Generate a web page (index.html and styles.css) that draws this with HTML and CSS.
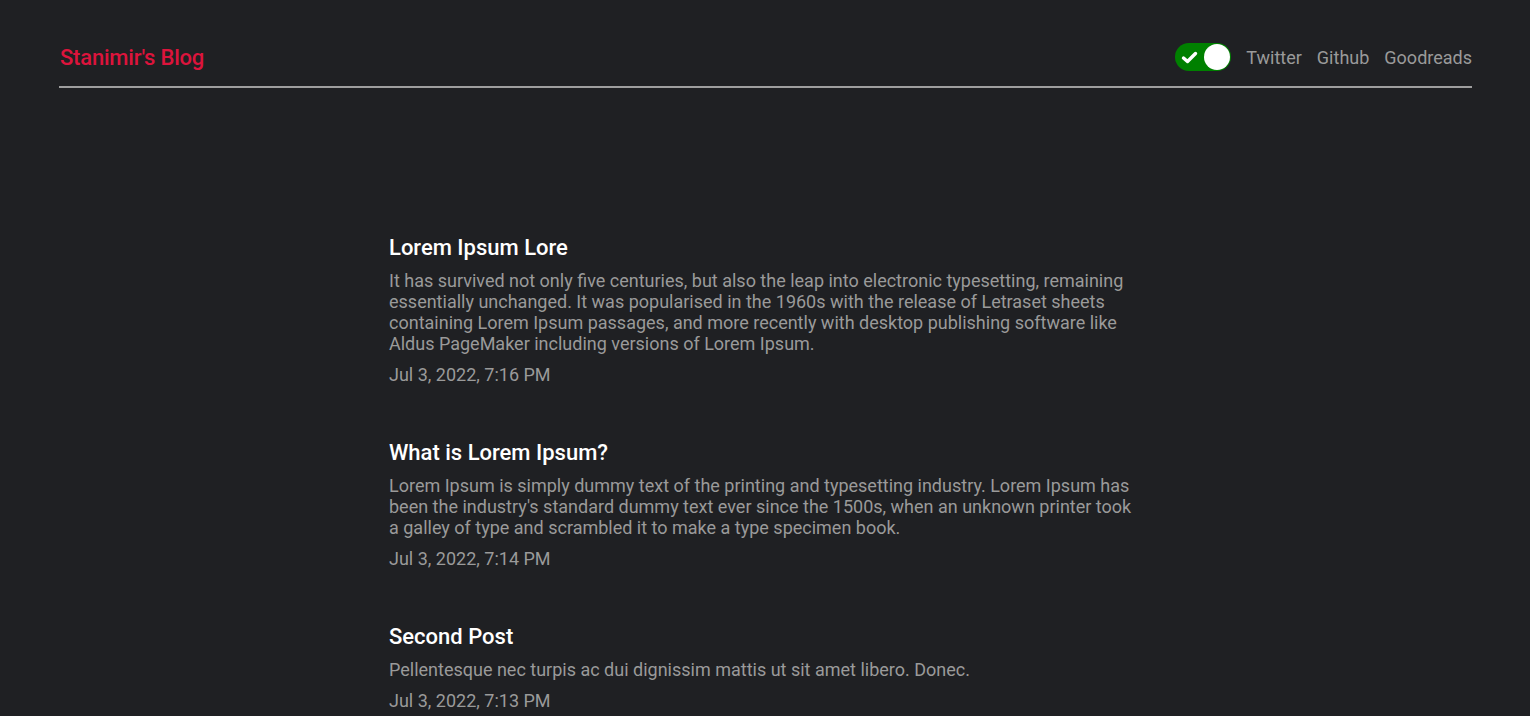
FILE: index.html
```html
<!DOCTYPE html>
<html lang="en">
<head>
<meta charset="utf-8">
<title>Stanimir's Blog</title>
<link rel="stylesheet" href="styles.css">
</head>
<body>
<header class="site-header">
  <a class="brand" href="#">Stanimir's Blog</a>
  <nav class="nav">
    <span class="toggle">
      <svg class="check" width="17" height="15" viewBox="0 0 17 15"><path d="M2.5 8 L6.5 11.5 L14.5 3.5" fill="none" stroke="#fff" stroke-width="3.4" stroke-linecap="round" stroke-linejoin="round"/></svg>
      <span class="knob"></span>
    </span>
    <a href="#">Twitter</a>
    <a href="#">Github</a>
    <a href="#">Goodreads</a>
  </nav>
</header>
<main class="posts">
  <article class="post">
    <h3 class="post-title">Lorem Ipsum Lore</h3>
    <p class="post-body">It has survived not only five centuries, but also the leap into electronic typesetting, remaining essentially unchanged. It was popularised in the 1960s with the release of Letraset sheets containing Lorem Ipsum passages, and more recently with desktop publishing software like Aldus PageMaker including versions of Lorem Ipsum.</p>
    <small class="post-date">Jul 3, 2022, 7:16 PM</small>
  </article>
  <article class="post">
    <h3 class="post-title">What is Lorem Ipsum?</h3>
    <p class="post-body">Lorem Ipsum is simply dummy text of the printing and typesetting industry. Lorem Ipsum has been the industry's standard dummy text ever since the 1500s, when an unknown printer took a galley of type and scrambled it to make a type specimen book.</p>
    <small class="post-date">Jul 3, 2022, 7:14 PM</small>
  </article>
  <article class="post">
    <h3 class="post-title">Second Post</h3>
    <p class="post-body">Pellentesque nec turpis ac dui dignissim mattis ut sit amet libero. Donec.</p>
    <small class="post-date">Jul 3, 2022, 7:13 PM</small>
  </article>
</main>
</body>
</html>
```
FILE: styles.css
```css
html, body {
  margin: 0;
  padding: 0;
  background: #1f2023;
  font-family: Roboto, "Liberation Sans", sans-serif;
  color: #9a9a9a;
}
a { text-decoration: none; }

.site-header {
  margin: 0 58px 0 59px;
  padding: 43px 0 15px;
  border-bottom: 2px solid #9e9e9e;
  display: flex;
  align-items: center;
  justify-content: space-between;
}
.brand {
  color: #dc143c;
  font-size: 22px;
  font-weight: 500;
  margin-left: 1px;
  letter-spacing: -0.2px;
}
.nav {
  display: flex;
  align-items: center;
  gap: 15px;
}
.nav a {
  color: #9a9a9a;
  font-size: 18px;
}
.toggle {
  position: relative;
  width: 56px;
  height: 28px;
  border-radius: 14px;
  background: #008000;
  display: flex;
  align-items: center;
  margin-right: 0;
}
.check {
  margin-left: 6px;
}
.knob {
  position: absolute;
  right: 1px;
  top: 1px;
  width: 26px;
  height: 26px;
  border-radius: 50%;
  background: #fff;
}

.posts {
  width: 752px;
  margin: 0 auto;
  padding-top: 147px;
}
.post {
  margin-bottom: 55px;
}
.post-title {
  margin: 0;
  color: #fff;
  font-size: 22px;
  font-weight: 500;
  line-height: 26px;
}
.post-body {
  margin: 9px 0 10px;
  font-size: 18px;
  line-height: 21px;
  color: #9a9a9a;
}
.post-date {
  display: block;
  font-size: 18px;
  line-height: 21px;
  color: #9a9a9a;
}
```
